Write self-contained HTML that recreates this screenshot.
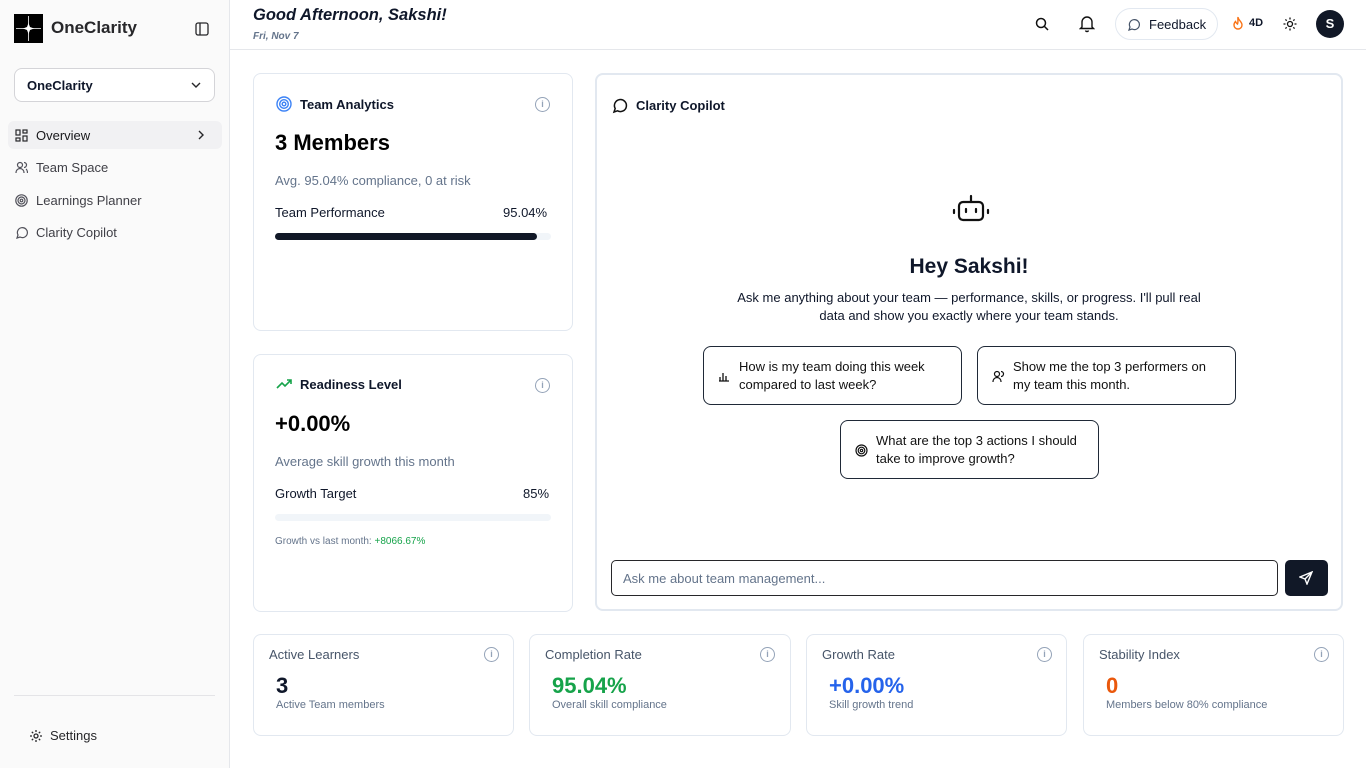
<!DOCTYPE html>
<html><head><meta charset="utf-8"><style>
*{box-sizing:border-box;margin:0;padding:0}
body{width:1366px;height:768px;overflow:hidden;font-family:"Liberation Sans",sans-serif;color:#0f172a;background:#fff;position:relative}
.abs{position:absolute}
.side{left:0;top:0;width:230px;height:768px;background:#fafafa;border-right:1px solid #e5e7eb}
.nav{position:absolute;left:8px;width:214px;height:28px;display:flex;align-items:center;font-size:13px;color:#3f3f46;padding-left:7px;border-radius:6px}
.nav svg{margin-right:8px}
.card{position:absolute;border:1px solid #e2e8f0;border-radius:8px;background:#fff}
.info{position:absolute;width:15px;height:15px;border:1.3px solid #94a3b8;border-radius:50%;font-size:9px;color:#94a3b8;text-align:center;line-height:13px;font-weight:bold}
.sc .t{position:absolute;left:15px;top:12px;font-size:13px;color:#475569}
.sc .v{position:absolute;left:22px;top:38px;font-size:22px;font-weight:bold}
.sc .s{position:absolute;left:22px;top:64px;font-size:11px;color:#64748b}
.sug{position:absolute;border:1px solid #1f2937;border-radius:8px;font-size:13px;line-height:18px;padding:0 18px 0 35px;display:flex;align-items:center;color:#111}
.sug svg{position:absolute;left:14px;top:50%;margin-top:-6px}
</style></head><body>
<div class="abs side">
 <div class="abs" style="left:14px;top:14px;width:29px;height:29px;background:#000">
  <svg width="29" height="29"><path d="M14.5 2V27M2 14.5H27" stroke="#fff" stroke-width=".8"/><path d="M14.5 9L16 13 20 14.5 16 16 14.5 20 13 16 9 14.5 13 13Z" fill="#fff"/></svg></div>
 <div class="abs" style="left:51px;top:18px;font-size:17px;font-weight:bold;color:#27272a">OneClarity</div>
 <svg class="abs" style="left:195px;top:22px" width="14" height="14"><rect x="1" y="1" width="12" height="12" rx="2" fill="none" stroke="#27272a" stroke-width="1.3"/><path d="M5 1V13" stroke="#27272a" stroke-width="1.3"/></svg>
 <div class="abs" style="left:14px;top:68px;width:201px;height:34px;border:1px solid #d4d4d8;border-radius:8px;background:#fff;font-size:13px;font-weight:bold;padding:9px 12px">OneClarity<svg style="position:absolute;right:13px;top:13px" width="10" height="6" fill="none" stroke="#27272a" stroke-width="1.4"><path d="M1 1l4 4 4-4"/></svg></div>
 <div class="nav" style="top:121px;background:#f1f1f3;color:#18181b">
  <svg width="13" height="13" fill="none" stroke="#27272a" stroke-width="1.2"><rect x="1" y="1" width="4" height="5"/><rect x="8" y="1" width="4" height="3"/><rect x="1" y="9" width="4" height="3"/><rect x="8" y="7" width="4" height="5"/></svg>Overview<svg style="position:absolute;right:10px" width="6" height="10" fill="none" stroke="#27272a" stroke-width="1.4"><path d="M1 1l4 4-4 4"/></svg></div>
 <div class="nav" style="top:153px"><svg width="13" height="13" fill="none" stroke="#52525b" stroke-width="1.2"><circle cx="5" cy="4" r="2.5"/><path d="M1 12c0-3 2-4.5 4-4.5s4 1.5 4 4.5M9 1.5a2.5 2.5 0 010 5M11 8c1 .7 1.5 2 1.5 4"/></svg>Team Space</div>
 <div class="nav" style="top:186px"><svg width="13" height="13" fill="none" stroke="#52525b" stroke-width="1.2"><circle cx="6.5" cy="6.5" r="5.7"/><circle cx="6.5" cy="6.5" r="3.5"/><circle cx="6.5" cy="6.5" r="1.3"/></svg>Learnings Planner</div>
 <div class="nav" style="top:218px"><svg width="13" height="13" fill="none" stroke="#52525b" stroke-width="1.2"><path d="M2 12l1-3a5 5 0 112 2z"/></svg>Clarity Copilot</div>
 <div class="abs" style="left:14px;top:695px;width:201px;border-top:1px solid #e4e4e7"></div>
 <div class="abs" style="left:29px;top:728px;font-size:13px;color:#27272a;display:flex;align-items:center"><svg style="margin-right:7px" width="14" height="14" fill="none" stroke="#27272a" stroke-width="1.3"><circle cx="7" cy="7" r="2"/><path d="M7 1v2M7 11v2M1 7h2M11 7h2M2.8 2.8l1.4 1.4M9.8 9.8l1.4 1.4M2.8 11.2l1.4-1.4M9.8 4.2l1.4-1.4"/></svg>Settings</div>
</div>
<div class="abs" style="left:230px;top:49px;width:1136px;border-top:1px solid #e5e7eb"></div>
<div class="abs" style="left:253px;top:6px;font-size:16.5px;font-weight:bold;font-style:italic">Good Afternoon, Sakshi!</div>
<div class="abs" style="left:253px;top:31px;font-size:10px;font-weight:bold;font-style:italic;color:#64748b">Fri, Nov 7</div>
<svg class="abs" style="left:1035px;top:17px" width="14" height="14" fill="none" stroke="#111" stroke-width="1.5"><circle cx="6" cy="6" r="4.5"/><path d="M9.5 9.5L13 13"/></svg>
<svg class="abs" style="left:1079px;top:15px" width="16" height="18" fill="none" stroke="#111" stroke-width="1.4"><path d="M3 12V7a5 5 0 0110 0v5l1.5 1.5h-13zM6.5 15.5a1.6 1.6 0 003 0"/></svg>
<div class="abs" style="left:1115px;top:8px;width:103px;height:32px;border:1px solid #e2e8f0;border-radius:16px;font-size:13px;padding:8px 0 0 33px">Feedback</div>
<svg class="abs" style="left:1127px;top:18px" width="13" height="13" fill="none" stroke="#475569" stroke-width="1.2"><path d="M2 12l1-3a5 5 0 112 2z"/></svg>
<svg class="abs" style="left:1232px;top:16px" width="12" height="15" fill="none" stroke="#f97316" stroke-width="1.4"><path d="M6 1c0 3 4 4.5 4 8a4 4 0 01-8 0c0-2 1-3 1.5-3.5C4 7 5 7.5 5.5 8 6.5 6 5.5 3 6 1z"/></svg>
<div class="abs" style="left:1249px;top:17px;font-size:11px;font-weight:bold">4D</div>
<svg class="abs" style="left:1283px;top:17px" width="14" height="14" fill="none" stroke="#111" stroke-width="1.3"><circle cx="7" cy="7" r="2.5"/><path d="M7 0.5v2M7 11.5v2M0.5 7h2M11.5 7h2M2.4 2.4l1.3 1.3M10.3 10.3l1.3 1.3M2.4 11.6l1.3-1.3M10.3 3.7l1.3-1.3"/></svg>
<div class="abs" style="left:1316px;top:10px;width:28px;height:28px;border-radius:50%;background:#111827;color:#fff;font-size:13px;font-weight:bold;text-align:center;line-height:28px">S</div>

<div class="card" style="left:253px;top:73px;width:320px;height:258px">
 <svg class="abs" style="left:22px;top:22px" width="16" height="16" fill="none" stroke="#3b82f6" stroke-width="1.4"><circle cx="8" cy="8" r="7"/><circle cx="8" cy="8" r="4.3"/><circle cx="8" cy="8" r="1.8"/></svg>
 <div class="abs" style="left:46px;top:23px;font-size:13px;font-weight:bold">Team Analytics</div>
 <div class="info" style="left:281px;top:23px">i</div>
 <div class="abs" style="left:21px;top:56px;font-size:22px;font-weight:bold;color:#000">3 Members</div>
 <div class="abs" style="left:21px;top:99px;font-size:13px;color:#64748b">Avg. 95.04% compliance, 0 at risk</div>
 <div class="abs" style="left:21px;top:131px;font-size:13px">Team Performance</div>
 <div class="abs" style="left:249px;top:131px;font-size:13px">95.04%</div>
 <div class="abs" style="left:21px;top:159px;width:276px;height:7px;border-radius:4px;background:#f1f5f9"><div style="width:95%;height:7px;border-radius:4px;background:#111827"></div></div>
</div>
<div class="card" style="left:253px;top:354px;width:320px;height:258px">
 <svg class="abs" style="left:22px;top:22px" width="17" height="14" fill="none" stroke="#16a34a" stroke-width="1.6"><path d="M1 11l5-5 3 3 6-6M11 3h4v4"/></svg>
 <div class="abs" style="left:46px;top:22px;font-size:13px;font-weight:bold">Readiness Level</div>
 <div class="info" style="left:281px;top:23px">i</div>
 <div class="abs" style="left:21px;top:56px;font-size:22px;font-weight:bold;color:#000">+0.00%</div>
 <div class="abs" style="left:21px;top:99px;font-size:13px;color:#64748b">Average skill growth this month</div>
 <div class="abs" style="left:21px;top:131px;font-size:13px">Growth Target</div>
 <div class="abs" style="left:269px;top:131px;font-size:13px">85%</div>
 <div class="abs" style="left:21px;top:159px;width:276px;height:7px;border-radius:4px;background:#f1f5f9"></div>
 <div class="abs" style="left:21px;top:181px;font-size:10px;color:#64748b">Growth vs last month: <span style="color:#16a34a">+8066.67%</span></div>
</div>
<div class="card" style="left:595px;top:73px;width:748px;height:538px;border:2px solid #e2e8f0">
 <svg class="abs" style="left:15px;top:23px" width="16" height="16" fill="none" stroke="#111" stroke-width="1.5"><path d="M2 14l1.2-3.5a6 6 0 112.3 2.3z"/></svg>
 <div class="abs" style="left:39px;top:23px;font-size:13px;font-weight:bold">Clarity Copilot</div>
 <svg class="abs" style="left:354px;top:118px" width="40" height="36" fill="none" stroke="#111" stroke-width="2.2" stroke-linecap="round"><path d="M20 3v6"/><rect x="8" y="9" width="24" height="18" rx="4"/><path d="M3 17v3M37 17v3M15 16v3M25 16v3"/></svg>
 <div class="abs" style="left:0;width:744px;top:180px;text-align:center;font-size:21px;font-weight:bold">Hey Sakshi!</div>
 <div class="abs" style="left:140px;width:464px;top:214px;text-align:center;font-size:13px;line-height:18px">Ask me anything about your team — performance, skills, or progress. I'll pull real data and show you exactly where your team stands.</div>
 <div class="sug" style="left:106px;top:271px;width:259px;height:59px"><svg width="12" height="12" stroke="#111" stroke-width="1.3"><path d="M2 11V7M5 11V3M8 11V6M11 11H1"/></svg>How is my team doing this week compared to last week?</div>
 <div class="sug" style="left:380px;top:271px;width:259px;height:59px"><svg width="13" height="12" fill="none" stroke="#111" stroke-width="1.2"><circle cx="5" cy="4" r="2.5"/><path d="M1 12c0-3 2-4.5 4-4.5s4 1.5 4 4.5M9 1.5a2.5 2.5 0 010 5"/></svg>Show me the top 3 performers on my team this month.</div>
 <div class="sug" style="left:243px;top:345px;width:259px;height:59px"><svg width="13" height="13" fill="none" stroke="#111" stroke-width="1.2"><circle cx="6.5" cy="6.5" r="5.5"/><circle cx="6.5" cy="6.5" r="3.3"/><circle cx="6.5" cy="6.5" r="1.2"/></svg>What are the top 3 actions I should take to improve growth?</div>
 <div class="abs" style="left:14px;top:485px;width:667px;height:36px;border:1px solid #27272a;border-radius:5px;font-size:13px;color:#64748b;padding:10px 11px">Ask me about team management...</div>
 <div class="abs" style="left:688px;top:485px;width:43px;height:36px;border-radius:5px;background:#111827"><svg style="margin:11px 0 0 14px" width="14" height="14" fill="none" stroke="#fff" stroke-width="1.4"><path d="M13 1L1 6l5 2 2 5zM13 1L6 8"/></svg></div>
</div>
<div class="card sc" style="left:253px;top:634px;width:261px;height:102px"><div class="t">Active Learners</div><div class="info" style="left:230px;top:12px">i</div><div class="v" style="color:#0f172a">3</div><div class="s">Active Team members</div></div>
<div class="card sc" style="left:529px;top:634px;width:262px;height:102px"><div class="t">Completion Rate</div><div class="info" style="left:230px;top:12px">i</div><div class="v" style="color:#16a34a">95.04%</div><div class="s">Overall skill compliance</div></div>
<div class="card sc" style="left:806px;top:634px;width:261px;height:102px"><div class="t">Growth Rate</div><div class="info" style="left:230px;top:12px">i</div><div class="v" style="color:#2563eb">+0.00%</div><div class="s">Skill growth trend</div></div>
<div class="card sc" style="left:1083px;top:634px;width:261px;height:102px"><div class="t">Stability Index</div><div class="info" style="left:230px;top:12px">i</div><div class="v" style="color:#ea580c">0</div><div class="s">Members below 80% compliance</div></div>
</body></html>
